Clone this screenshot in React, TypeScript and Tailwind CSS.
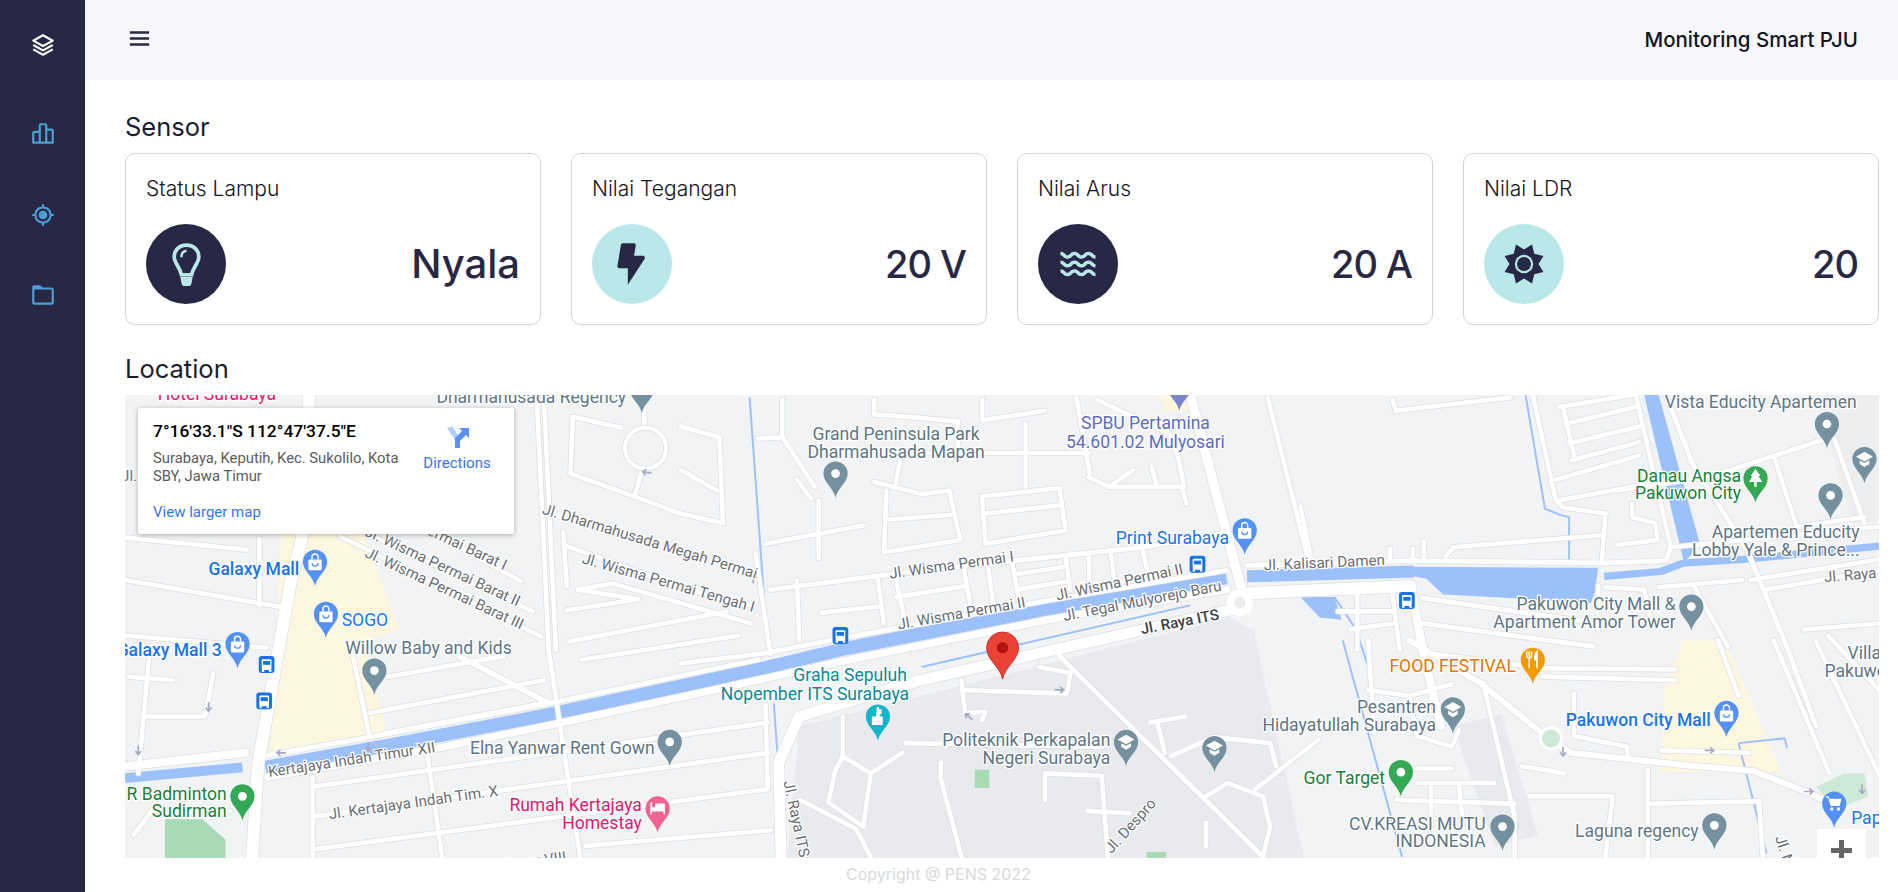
import {
  BiBarChartAlt2,
  BiCurrentLocation,
  BiFolder,
  BiLayer,
  BiMenu,
  BiSolidBolt,
  BiWater,
} from "react-icons/bi";
import type { ReactNode } from "react";

function BulbIcon() {
  return (
    <svg viewBox="0 0 28 42" className="h-[43px] w-[29px]" fill="none" stroke="currentColor">
      <path d="M14 2 C6.5 2 2 7.5 2 13.5 C2 20 7.5 23 9 31 H19 C20.5 23 26 20 26 13.5 C26 7.5 21.5 2 14 2 Z" strokeWidth={3.6} />
      <path d="M9 14 C9 10 11 8 14 7.5" strokeWidth={2.4} />
      <path d="M8 33 H20 L19 39 Q18.5 42 16 42 H12 Q9.5 42 9 39 Z" fill="currentColor" stroke="none" />
    </svg>
  );
}

// spiky 8-point star, points sit 22.5deg off the axes
const starPoints = Array.from({ length: 16 }, (_, i) => {
  const angle = (i * 22.5 * Math.PI) / 180;
  const radius = i % 2 === 1 ? 21 : 14.5;
  return `${(24 + radius * Math.cos(angle)).toFixed(2)},${(24 + radius * Math.sin(angle)).toFixed(2)}`;
}).join(" ");

function LdrIcon() {
  return (
    <svg viewBox="0 0 48 48" className="size-[48px]">
      <polygon points={starPoints} fill="#282846" />
      <circle cx={24} cy={24} r={9.2} fill="#bae8e8" />
      <circle cx={24} cy={24} r={7} fill="#282846" />
    </svg>
  );
}

const sensors = [
  { title: "Status Lampu", value: "Nyala", dark: true, big: true, icon: <BulbIcon /> },
  { title: "Nilai Tegangan", value: "20 V", dark: false, big: false, icon: <BiSolidBolt size={50} /> },
  { title: "Nilai Arus", value: "20 A", dark: true, big: false, icon: <BiWater size={42} /> },
  { title: "Nilai LDR", value: "20", dark: false, big: false, icon: <LdrIcon /> },
];

// [width, points] in the map's own coordinates
const roads: [number, string][] = [
  // main roads
  [10, "255,326 250,441 240,480 213,631 208,709"],
  [7, "105,633 202,622"],
  [4, "221,624 305,609 453,581 626,545"],
  [4, "562,548 629,540 697,527 865,496 1013,471"],
  [6, "221,642 357,619 450,600 562,576 697,546 865,512 1013,487"],
  [9, "645,709 643,630 660,592 760,562 1020,503"],
  [8, "983,326 1027,493"],
  [10, "1030,490 1165,484"],
  [4, "1030,467 1168,463 1326,465 1376,463 1380,452"],
  [7, "1165,484 1168,498 1175,537 1190,600"],
  [5, "1164,529 1222,564 1274,606 1297,622 1390,632 1448,637 1494,655 1517,666"],
  // left side
  [3.8, "103,444 204,454"],
  [3.8, "103,479 236,502"],
  [3.8, "103,525 220,535"],
  [3.8, "214,445 214,500"],
  [3.8, "281,443 447,526"],
  [3.8, "304,441 440,505"],
  [3.8, "360,441 430,480"],
  [3.8, "443,326 453,537 462,597 479,708"],
  [3.8, "449,326 459,537"],
  [3.8, "123,542 114,639"],
  [3.8, "176,556 169,592 121,592"],
  [3.8, "106,559 143,562"],
  [3.8, "291,540 305,609"],
  [3.8, "320,559 416,542"],
  [3.8, "305,589 449,562"],
  [3.8, "317,606 449,581"],
  [4.5, "379,542 453,581"],
  [3.8, "110,690 125,670 190,670"],
  // below the canal
  [3.8, "258,650 634,597"],
  [3.8, "258,675 634,622"],
  [3.8, "258,702 634,652"],
  [3.8, "483,699 637,686"],
  [3.8, "258,642 258,708"],
  [3.8, "353,625 365,708"],
  [3.8, "632,582 634,652"],
  // ring and the blocks near it
  [3.8, "473,344 513,353"],
  [3.8, "473,344 471,391 524,410 562,424 597,432"],
  [3.8, "532,326 532,352"],
  [3.8, "465,439 468,484"],
  [3.8, "468,451 562,485 620,500"],
  [3.8, "468,504 527,495 477,487 506,482 562,498 620,515"],
  [3.8, "470,530 600,505"],
  [3.8, "480,545 610,525"],
  [3.8, "562,352 594,361 597,432"],
  [3.8, "562,388 592,405"],
  [3.8, "524,410 530,388"],
  // centre, upper
  [3.8, "722,330 722,342 762,345 791,348 791,372"],
  [3.8, "811,330 811,347 863,339"],
  [3.8, "734,374 899,374"],
  [3.8, "847,350 847,402"],
  [3.8, "744,377 739,402"],
  [3.8, "722,398 761,408 784,405 793,446 730,456 732,405"],
  [3.8, "734,429 786,425"],
  [3.8, "811,410 875,403 880,438 814,449 811,410"],
  [3.8, "814,424 877,417"],
  [4, "636,487 730,475 838,463 943,452 1014,440"],
  [3.8, "624,457 636,540"],
  [3.8, "658,479 660,529"],
  [3.8, "725,479 730,515"],
  [3.8, "740,479 747,512"],
  [3.8, "796,470 801,498"],
  [3.8, "816,468 820,498"],
  [3.8, "836,465 842,498"],
  [3.8, "880,460 884,487"],
  [3.8, "899,457 900,485"],
  [3.8, "917,454 921,484"],
  [3.8, "943,451 948,474"],
  [3.8, "678,506 727,501"],
  [3.8, "740,493 798,484"],
  [3.8, "840,474 880,468"],
  [3.8, "840,487 882,480"],
  [3.8, "632,449 713,434"],
  [3.8, "676,413 676,461"],
  [3.8, "658,396 670,412"],
  [3.8, "626,362 646,361"],
  [3.8, "646,330 646,361 673,402"],
  [3.8, "899,394 916,402 936,388"],
  [3.8, "889,328 900,391"],
  [3.8, "916,402 976,402 980,416"],
  [3.8, "951,385 955,400"],
  [3.8, "906,330 966,358 973,377 978,402"],
  [3.8, "1047,328 1081,465"],
  // campus
  [4, "875,542 1043,708"],
  [3.8, "858,551 884,556 881,573 794,570"],
  [3.8, "794,562 797,589 814,588 811,595"],
  [3.8, "950,597 979,592"],
  [3.8, "956,598 962,622"],
  [3.8, "967,625 1002,609 1049,614 1054,633"],
  [3.8, "1089,611 1037,652"],
  [3.8, "996,658 1014,647 1043,658 1049,683 1043,708"],
  [3.8, "696,625 719,639 713,683 684,663 690,636 696,625"],
  [3.8, "748,614 910,617"],
  [3.8, "863,639 910,641"],
  [3.8, "863,639 863,661"],
  [3.8, "777,630 777,644 794,708"],
  [3.8, "910,644 915,708"],
  [3.8, "996,680 996,699"],
  [3.8, "898,670 933,672"],
  [3.8, "696,592 696,625"],
  [3.8, "661,661 707,685 719,708"],
  [3.8, "719,639 745,622"],
  // east, lower
  [3.8, "1225,564 1251,675 1251,708"],
  [3.8, "1268,552 1384,553"],
  [3.8, "1274,559 1384,562"],
  [3.8, "1182,540 1268,551"],
  [3.8, "1130,570 1164,575 1199,565"],
  [3.8, "1130,529 1135,606"],
  [3.8, "1164,575 1170,608 1199,617 1205,603"],
  [3.8, "1170,635 1199,635"],
  [3.8, "1170,647 1234,647"],
  [3.8, "1182,647 1182,683"],
  [3.8, "1205,647 1208,680"],
  [3.8, "1153,661 1251,664"],
  [3.8, "1263,658 1332,658 1326,708"],
  [3.8, "1257,633 1292,639"],
  [3.8, "1364,664 1453,662 1456,708"],
  [3.8, "1361,636 1361,708"],
  [3.8, "1372,620 1445,622"],
  [3.8, "1300,573 1300,608 1344,617 1344,625"],
  [3.8, "1419,529 1436,575"],
  [3.8, "1465,529 1511,639"],
  // east, upper
  [3.8, "1266,326 1285,413 1291,419 1326,424 1323,465"],
  [3.8, "1288,336 1348,326"],
  [3.8, "1293,350 1351,336"],
  [3.8, "1296,366 1354,352"],
  [3.8, "1298,380 1354,365"],
  [3.8, "1285,396 1354,376"],
  [3.8, "1288,413 1364,399"],
  [3.8, "1291,336 1301,380"],
  [3.8, "1348,416 1348,427 1367,432 1369,446 1336,450"],
  [3.8, "1351,326 1380,452"],
  [3.8, "1194,460 1200,452 1323,442"],
  [3.8, "1148,463 1148,453"],
  [3.8, "1167,463 1167,453"],
  [3.8, "1176,463 1176,447"],
  [3.8, "1150,330 1153,339 1247,328"],
  [3.8, "1074,418 1083,462"],
  [4, "1376,326 1398,383 1443,454 1477,537 1500,600"],
  [3.8, "1411,394 1506,363"],
  [3.8, "1335,405 1411,394"],
  [3.8, "1515,362 1540,432"],
  [3.8, "1466,379 1484,435"],
  [3.8, "1484,435 1540,427"],
  [3.8, "1380,452 1552,435"],
  [3.8, "1446,479 1552,462"],
  [3.8, "1458,487 1552,471"],
  [4, "1175,494 1320,515"],
  [3.8, "1105,505 1150,505"],
  [3.8, "1121,490 1121,537"],
  [3.8, "1150,490 1156,537"],
  [3.8, "1115,520 1150,515"],
  [4, "1175,515 1316,534"],
  [3.8, "1320,484 1320,520"],
  [3.8, "1326,485 1358,487 1364,515"],
  [3.8, "1370,485 1439,479"],
  [3.8, "1398,482 1427,534"],
  [3.8, "1490,520 1552,515"],
  [3.8, "1510,525 1552,570"],
  [3.8, "1500,530 1552,640"],
];

type Label = { x: number; y: number; t: string; c: string; a?: "start" | "end" | "middle"; r?: number; b?: boolean };

const GREY = "#5f7583";
const ROAD = "#6a6e73";
const BLUE = "#1a73e8";
const GREEN = "#188038";
const TEAL = "#0b8a94";
const PINK = "#e5176b";

const labels: Label[] = [
  { x: 130, y: 330, t: "Hotel Surabaya", c: PINK },
  { x: 517, y: 333, t: "Dharmahusada Regency", c: GREY, a: "end" },
  { x: 740, y: 363, t: "Grand Peninsula Park", c: GREY, a: "middle" },
  { x: 740, y: 378, t: "Dharmahusada Mapan", c: GREY, a: "middle" },
  { x: 946, y: 354, t: "SPBU Pertamina", c: "#5c6bc0", a: "middle" },
  { x: 946, y: 370, t: "54.601.02 Mulyosari", c: "#5c6bc0", a: "middle" },
  { x: 1375, y: 337, t: "Vista Educity Apartemen", c: GREY },
  { x: 1438, y: 398, t: "Danau Angsa", c: GREEN, a: "end" },
  { x: 1438, y: 412, t: "Pakuwon City", c: GREEN, a: "end" },
  { x: 1536, y: 444, t: "Apartemen Educity", c: GREY, a: "end" },
  { x: 1536, y: 459, t: "Lobby Yale & Prince...", c: GREY, a: "end" },
  { x: 1015, y: 449, t: "Print Surabaya", c: BLUE, a: "end" },
  { x: 1384, y: 504, t: "Pakuwon City Mall &", c: GREY, a: "end" },
  { x: 1384, y: 519, t: "Apartment Amor Tower", c: GREY, a: "end" },
  { x: 247, y: 475, t: "Galaxy Mall", c: BLUE, a: "end", b: true },
  { x: 282, y: 517, t: "SOGO", c: BLUE },
  { x: 183, y: 542, t: "Galaxy Mall 3", c: BLUE, a: "end", b: true },
  { x: 285, y: 540, t: "Willow Baby and Kids", c: GREY },
  { x: 388, y: 623, t: "Elna Yanwar Rent Gown", c: GREY },
  { x: 530, y: 670, t: "Rumah Kertajaya", c: PINK, a: "end" },
  { x: 530, y: 685, t: "Homestay", c: PINK, a: "end" },
  { x: 187, y: 661, t: "R Badminton", c: GREEN, a: "end" },
  { x: 187, y: 675, t: "Sudirman", c: GREEN, a: "end" },
  { x: 702, y: 563, t: "Graha Sepuluh", c: TEAL, a: "middle" },
  { x: 673, y: 578, t: "Nopember ITS Surabaya", c: TEAL, a: "middle" },
  { x: 917, y: 616, t: "Politeknik Perkapalan", c: GREY, a: "end" },
  { x: 917, y: 631, t: "Negeri Surabaya", c: GREY, a: "end" },
  { x: 1252, y: 555, t: "FOOD FESTIVAL", c: "#e37400", a: "end" },
  { x: 1186, y: 589, t: "Pesantren", c: GREY, a: "end" },
  { x: 1186, y: 604, t: "Hidayatullah Surabaya", c: GREY, a: "end" },
  { x: 1413, y: 600, t: "Pakuwon City Mall", c: BLUE, a: "end", b: true },
  { x: 1144, y: 648, t: "Gor Target", c: GREEN, a: "end" },
  { x: 1227, y: 686, t: "CV.KREASI MUTU", c: GREY, a: "end" },
  { x: 1227, y: 700, t: "INDONESIA", c: GREY, a: "end" },
  { x: 1403, y: 692, t: "Laguna regency", c: GREY, a: "end" },
  { x: 1526, y: 544, t: "Villa", c: GREY },
  { x: 1507, y: 559, t: "Pakuwon", c: GREY },
  { x: 1529, y: 681, t: "Papa", c: BLUE },
  { x: 113, y: 397, t: "Jl.", c: ROAD, a: "end" },
  // street names
  { x: 447, y: 424, t: "Jl. Dharmahusada Megah Permai", c: ROAD, r: 17 },
  { x: 480, y: 465, t: "Jl. Wisma Permai Tengah I", c: ROAD, r: 16 },
  { x: 416, y: 471, t: "Jl. Wisma Permai Barat I", c: ROAD, a: "end", r: 25 },
  { x: 427, y: 501, t: "Jl. Wisma Permai Barat II", c: ROAD, a: "end", r: 25 },
  { x: 430, y: 520, t: "Jl. Wisma Permai Barat III", c: ROAD, a: "end", r: 25 },
  { x: 735, y: 478, t: "Jl. Wisma Permai I", c: ROAD, r: -8 },
  { x: 742, y: 520, t: "Jl. Wisma Permai II", c: ROAD, r: -10 },
  { x: 873, y: 496, t: "Jl. Wisma Permai II", c: ROAD, r: -12 },
  { x: 879, y: 513, t: "Jl. Tegal Mulyorejo Baru", c: ROAD, r: -11 },
  { x: 943, y: 524, t: "Jl. Raya ITS", c: "#3c4043", r: -11, b: true },
  { x: 1044, y: 471, t: "Jl. Kalisari Damen", c: ROAD, r: -2.5 },
  { x: 222, y: 642, t: "Kertajaya Indah Timur XII", c: ROAD, r: -8.5 },
  { x: 272, y: 677, t: "Jl. Kertajaya Indah Tim. X", c: ROAD, r: -8 },
  { x: 468, y: 712, t: "Jl. Kertajaya Indah Timur VIII", c: ROAD, a: "end", r: -8 },
  { x: 647, y: 646, t: "Jl. Raya ITS", c: ROAD, r: 78 },
  { x: 918, y: 706, t: "Jl. Despro", c: ROAD, r: -48 },
  { x: 1466, y: 692, t: "Jl. Mulyosari", c: ROAD, r: 72 },
  { x: 1507, y: 481, t: "Jl. Raya", c: ROAD, r: -5 },
];

type Kind = "dot" | "shop" | "grad" | "tree" | "fork" | "bed" | "landmark" | "cart";

const pins: { x: number; y: number; c: string; k: Kind }[] = [
  { x: 530, y: 341, c: "#75909e", k: "dot" },
  { x: 974, y: 339, c: "#7986cb", k: "dot" },
  { x: 690, y: 411, c: "#75909e", k: "dot" },
  { x: 1509, y: 370, c: "#75909e", k: "dot" },
  { x: 1540, y: 399, c: "#75909e", k: "grad" },
  { x: 1512, y: 429, c: "#75909e", k: "dot" },
  { x: 1450, y: 415, c: "#34a853", k: "tree" },
  { x: 1028, y: 458, c: "#5491f5", k: "shop" },
  { x: 1397, y: 521, c: "#75909e", k: "dot" },
  { x: 260, y: 484, c: "#5491f5", k: "shop" },
  { x: 269, y: 527, c: "#5491f5", k: "shop" },
  { x: 196, y: 552, c: "#5491f5", k: "shop" },
  { x: 309, y: 574, c: "#75909e", k: "dot" },
  { x: 553, y: 633, c: "#75909e", k: "dot" },
  { x: 200, y: 678, c: "#34a853", k: "dot" },
  { x: 543, y: 688, c: "#f06292", k: "bed" },
  { x: 725, y: 612, c: "#12b5cb", k: "landmark" },
  { x: 930, y: 633, c: "#75909e", k: "grad" },
  { x: 1003, y: 638, c: "#75909e", k: "grad" },
  { x: 1157, y: 658, c: "#34a853", k: "dot" },
  { x: 1241, y: 703, c: "#75909e", k: "dot" },
  { x: 1416, y: 702, c: "#75909e", k: "dot" },
  { x: 1200, y: 606, c: "#75909e", k: "grad" },
  { x: 1266, y: 565, c: "#f29900", k: "fork" },
  { x: 1426, y: 609, c: "#5491f5", k: "shop" },
  { x: 1515, y: 684, c: "#5491f5", k: "cart" },
];

const buses: [number, number][] = [
  [220, 549],
  [218, 579],
  [694, 525],
  [989, 466],
  [1162, 496],
];

// one-way arrows on small streets
const arrows: [number, number, number][] = [
  [172, 584, 90],
  [114, 620, 90],
  [304, 617, 90],
  [232, 622, 180],
  [534, 390, 190],
  [622, 478, -90],
  [875, 570, 0],
  [800, 592, 220],
  [1291, 621, 90],
  [1412, 620, 0],
  [1494, 654, 0],
  [1538, 652, 90],
];

function PinGlyph({ kind }: { kind: Kind }) {
  if (kind === "dot") return <circle cy={-20} r={3.6} fill="#fff" />;
  if (kind === "shop")
    return (
      <g>
        <rect x={-5.5} y={-22} width={11} height={9} rx={1} fill="#fff" />
        <path d="M-2.5 -22 V-24 A2.5 2.5 0 0 1 2.5 -24 V-22" fill="none" stroke="#fff" strokeWidth={1.2} />
        <path d="M-2.5 -19 A2.5 2.5 0 0 0 2.5 -19" fill="none" stroke="#5491f5" strokeWidth={1} />
      </g>
    );
  if (kind === "grad")
    return (
      <g fill="#fff">
        <path d="M0 -26 L7 -22 L0 -18 L-7 -22 Z" />
        <path d="M-4 -19 V-16 L0 -13.5 L4 -16 V-19 L0 -16.8 Z" />
      </g>
    );
  if (kind === "tree")
    return <path d="M0 -28 L4 -22 H2.5 L5.5 -17 H1 V-13 H-1 V-17 H-5.5 L-2.5 -22 H-4 Z" fill="#fff" />;
  if (kind === "fork")
    return (
      <g fill="none" stroke="#fff" strokeWidth={1.2}>
        <path d="M-3 -27 V-22.5 M-5 -27 V-23 Q-5 -21.5 -3 -21.5 Q-1 -21.5 -1 -23 V-27 M-3 -21 V-13" />
        <path d="M3.5 -13 V-27 Q1.5 -25 1.5 -20 H3.5" fill="#fff" />
      </g>
    );
  if (kind === "bed")
    return <path d="M-6 -25 H-4.5 V-21 H-2 V-24 H6 V-15 H4.8 V-17.5 H-4.8 V-15 H-6 Z" fill="#fff" />;
  if (kind === "landmark")
    return <path d="M-1 -28 H1 V-26 H3 V-22 H1.5 V-20 H4 V-13 H-5 V-20 H-1.5 V-24 H-1 Z" fill="#fff" />;
  return (
    <g fill="#fff">
      <path d="M-7 -26 H-4.5 L-4 -24 H6 L4.5 -18 H-3 L-5 -25 H-7 Z" />
      <circle cx={-2} cy={-15.5} r={1.4} />
      <circle cx={3.5} cy={-15.5} r={1.4} />
    </g>
  );
}

function MapDrawing() {
  return (
    <svg
      viewBox="103 326 1449 383"
      className="block h-full w-full [font-family:Roboto,sans-serif]"
      preserveAspectRatio="none"
      aria-label="Peta lokasi"
    >
      <rect x={103} y={326} width={1449} height={383} fill="#f1f3f4" />
      {/* campus */}
      <polygon points="660,600 760,575 1015,510 1035,520 1077,709 650,709" fill="#e8eaed" />
      <polygon points="1200,600 1240,590 1270,690 1235,700" fill="#e8eaed" />
      <polygon points="1500,326 1552,326 1552,430 1530,432" fill="#eceef0" />
      {/* malls */}
      <polygon points="232,441 300,441 330,520 300,530 320,606 223,620" fill="#fef7e0" />
      <polygon points="1390,529 1425,529 1471,637 1372,638 1375,570" fill="#fef7e0" />
      <polygon points="958,326 990,326 986,339 962,339" fill="#fef7e0" />
      {/* parks */}
      <polygon points="136,677 167,677 186,694 186,709 136,709" fill="#a8dab5" />
      <rect x={805} y={636} width={12} height={15} fill="#a8dab5" />
      <rect x={947} y={704} width={16} height={5} fill="#a8dab5" />
      <polygon points="1500,650 1523,639 1540,639 1543,658 1517,669" fill="#ceead6" />
      {/* water */}
      <g fill="none" stroke="#9cc0f9" strokeLinejoin="round">
        <polyline points="103,643 200,634" strokeWidth={8} />
        <polyline points="219,634 320,616 450,591 626,553 697,536 865,503 1013,477" strokeWidth={11} />
        <polyline points="1030,476 1168,472" strokeWidth={10} />
        <polyline points="1325,476 1372,472 1390,465 1440,462 1552,451" strokeWidth={6} />
        <g strokeWidth={1.6}>
          <polyline points="619,328 634,537" />
          <polyline points="639,581 648,708" />
          <polyline points="1260,326 1276,420 1288,425 1296,427 1296,462" />
          <polyline points="761,551 983,500" />
          <polyline points="1109,529 1158,708" />
          <polyline points="1436,614 1459,705" />
          <polyline points="1436,614 1474,610 1476,618" />
          <polyline points="1102,493 1120,520 1133,560" />
        </g>
      </g>
      <g fill="#9cc0f9">
        <polygon points="1168,468 1320,469 1317,490 1314,498 1247,494 1192,491 1178,478 1168,476" />
        <polygon points="1358,326 1370,326 1404,449 1391,465" />
        <polygon points="1074,493 1102,493 1108,512 1090,510" />
      </g>
      {/* road casing, then road fill so crossings stay clean */}
      <g fill="none" stroke="#dcdfe3" strokeLinecap="round" strokeLinejoin="round">
        {roads.map(([w, pts], i) => (
          <polyline key={i} points={pts} strokeWidth={w + 1.2} />
        ))}
      </g>
      <g fill="none" stroke="#fff" strokeLinecap="round" strokeLinejoin="round">
        {roads.map(([w, pts], i) => (
          <polyline key={i} points={pts} strokeWidth={w} />
        ))}
      </g>
      <circle cx={1024} cy={498} r={11} fill="#fff" />
      <circle cx={1024} cy={498} r={4} fill="#eceef0" stroke="#dcdfe3" strokeWidth={0.6} />
      <circle cx={533} cy={370} r={17} fill="none" stroke="#dcdfe3" strokeWidth={4.6} />
      <circle cx={533} cy={370} r={17} fill="none" stroke="#fff" strokeWidth={3.5} />
      <circle cx={1281} cy={610} r={10} fill="#fff" />
      <circle cx={1281} cy={610} r={7.5} fill="#ceead6" />

      {arrows.map(([x, y, r], i) => (
        <path
          key={i}
          transform={`translate(${x} ${y}) rotate(${r})`}
          d="M-4 0 H3 M0.5 -2.5 L3.5 0 L0.5 2.5"
          fill="none"
          stroke="#a7abc3"
          strokeWidth={1.4}
        />
      ))}

      {labels.map((l, i) => {
        const street = l.r !== undefined || l.c === ROAD;
        return (
          <text
            key={i}
            x={l.x}
            y={l.y}
            fontSize={street ? 12.5 : 14.5}
            fontWeight={l.b ? 500 : 400}
            fill={l.c}
            stroke="#fff"
            strokeWidth={2}
            textAnchor={l.a ?? "start"}
            transform={l.r ? `rotate(${l.r} ${l.x} ${l.y})` : undefined}
            className="[paint-order:stroke]"
          >
            {l.t}
          </text>
        );
      })}

      {pins.map((p, i) => (
        <g key={i} transform={`translate(${p.x} ${p.y})`}>
          <path d="M0 0 C-1.5 -8 -10 -12 -10 -20 A10 10 0 1 1 10 -20 C10 -12 1.5 -8 0 0 Z" fill={p.c} />
          <PinGlyph kind={p.k} />
        </g>
      ))}

      {buses.map(([x, y], i) => (
        <g key={i} transform={`translate(${x} ${y})`}>
          <rect x={-6.5} y={-7} width={13} height={14} rx={2.5} fill="#1a73e8" />
          <rect x={-4} y={-4.5} width={8} height={9} rx={1} fill="#fff" />
          <rect x={-3} y={-3} width={6} height={3.2} fill="#1a73e8" />
          <rect x={-4} y={4.5} width={2} height={1.5} fill="#fff" />
          <rect x={2} y={4.5} width={2} height={1.5} fill="#fff" />
        </g>
      ))}

      {/* dropped marker */}
      <g transform="translate(828 561) scale(1.32 1.3)">
        <path
          d="M0 0 C-1.5 -8 -10 -12 -10 -20 A10 10 0 1 1 10 -20 C10 -12 1.5 -8 0 0 Z"
          fill="#ea4335"
          stroke="#c5221f"
          strokeWidth={0.5}
        />
        <circle cy={-20} r={3.6} fill="#b31412" />
      </g>
    </svg>
  );
}

function SensorCard({
  title,
  value,
  dark,
  big,
  icon,
}: {
  title: string;
  value: string;
  dark: boolean;
  big: boolean;
  icon: ReactNode;
}) {
  return (
    <div className="h-[172px] rounded-[10px] border border-[#d3d3d3] bg-white px-[20px] pt-[20px]">
      <p className="text-[21px] font-light leading-[30px] text-[#14141f]">{title}</p>
      <div className="mt-[20px] flex items-center justify-between">
        <div
          className={
            dark
              ? "flex size-[80px] items-center justify-center rounded-full bg-[#282846] text-[#bae8e8]"
              : "flex size-[80px] items-center justify-center rounded-full bg-[#bae8e8] text-[#282846]"
          }
        >
          {icon}
        </div>
        <span
          className={
            big
              ? "text-[40px] font-medium text-[#282846]"
              : "text-[38px] font-medium tracking-[-1px] text-[#282846]"
          }
        >
          {value}
        </span>
      </div>
    </div>
  );
}

function InfoCard() {
  return (
    <div className="absolute left-[13px] top-[13px] flex h-[126px] w-[376px] rounded-[2px] bg-white pl-[15px] pt-[13px] shadow-[0_1px_5px_rgba(0,0,0,0.3)] [font-family:Roboto,sans-serif]">
      <div className="w-[262px] shrink-0">
        <p className="text-[17.4px] font-medium leading-[20px] text-black">7°16'33.1"S 112°47'37.5"E</p>
        <p className="mt-[8px] text-[14.8px] leading-[18px] text-[#5b5b5b]">
          Surabaya, Keputih, Kec. Sukolilo, Kota SBY, Jawa Timur
        </p>
        <p className="mt-[18px] text-[15px] leading-[18px] text-[#3a75e6]">View larger map</p>
      </div>
      <div className="flex w-[84px] flex-col items-center pt-[4px]">
        <svg viewBox="0 0 24 24" className="size-[24px]">
          <path d="M2 3 L7 1 L15 13 V23 H10 V15 Z" fill="#b6cdfc" />
          <path d="M10 23 V13 L17 6 L14 3 H24 V13 L21 10 L15 16 V23 Z" fill="#5b8ff9" />
        </svg>
        <span className="mt-[5px] text-[15px] leading-[18px] text-[#3a75e6]">Directions</span>
      </div>
    </div>
  );
}

export default function App() {
  return (
    <div className="flex h-[892px] overflow-hidden bg-white [font-family:Inter,sans-serif]">
      <aside className="flex w-[85px] shrink-0 flex-col items-center bg-[#282846] text-[#4e9fd1]">
        <div className="flex h-[90px] items-center text-white">
          <BiLayer size={26} />
        </div>
        <div className="mt-[4px] flex h-[80px] items-center">
          <BiBarChartAlt2 size={26} />
        </div>
        <div className="mt-[1px] flex h-[80px] items-center">
          <BiCurrentLocation size={26} />
        </div>
        <div className="flex h-[80px] items-center">
          <BiFolder size={26} />
        </div>
      </aside>

      <div className="flex min-w-0 flex-1 flex-col">
        <header className="flex h-[80px] shrink-0 items-center justify-between bg-[#f6f6fb] pl-[40px] pr-[40px]">
          <BiMenu size={29} className="-translate-y-[2px] text-[#282846]" />
          <span className="text-[20.5px] font-medium text-[#14141f]">Monitoring Smart PJU</span>
        </header>

        <main className="pl-[40px] pr-[19px]">
          <h2 className="mt-[32px] text-[25.5px] leading-[30px] text-[#1c1c2e]">Sensor</h2>
          <div className="mt-[11px] grid grid-cols-4 gap-[30px]">
            {sensors.map((s) => (
              <SensorCard key={s.title} {...s} />
            ))}
          </div>
          <h2 className="mt-[29px] text-[25.5px] leading-[30px] text-[#1c1c2e]">Location</h2>
          <div className="relative mt-[11px] h-[463px] overflow-hidden">
            <MapDrawing />
            <InfoCard />
            <div className="absolute bottom-0 left-[1692px] flex h-[29px] w-[49px] justify-center bg-white pt-[14px]">
              <span className="relative block h-[15px] w-[21px]">
                <span className="absolute left-0 top-[5px] h-[5px] w-[21px] bg-[#666]" />
                <span className="absolute left-[8px] top-[-3px] h-[20px] w-[5px] bg-[#666]" />
              </span>
            </div>
          </div>
        </main>

        <footer className="mt-[7px] pl-[761px] text-[16px] leading-[18px] text-[#d9d9d9]">Copyright @ PENS 2022</footer>
      </div>
    </div>
  );
}
